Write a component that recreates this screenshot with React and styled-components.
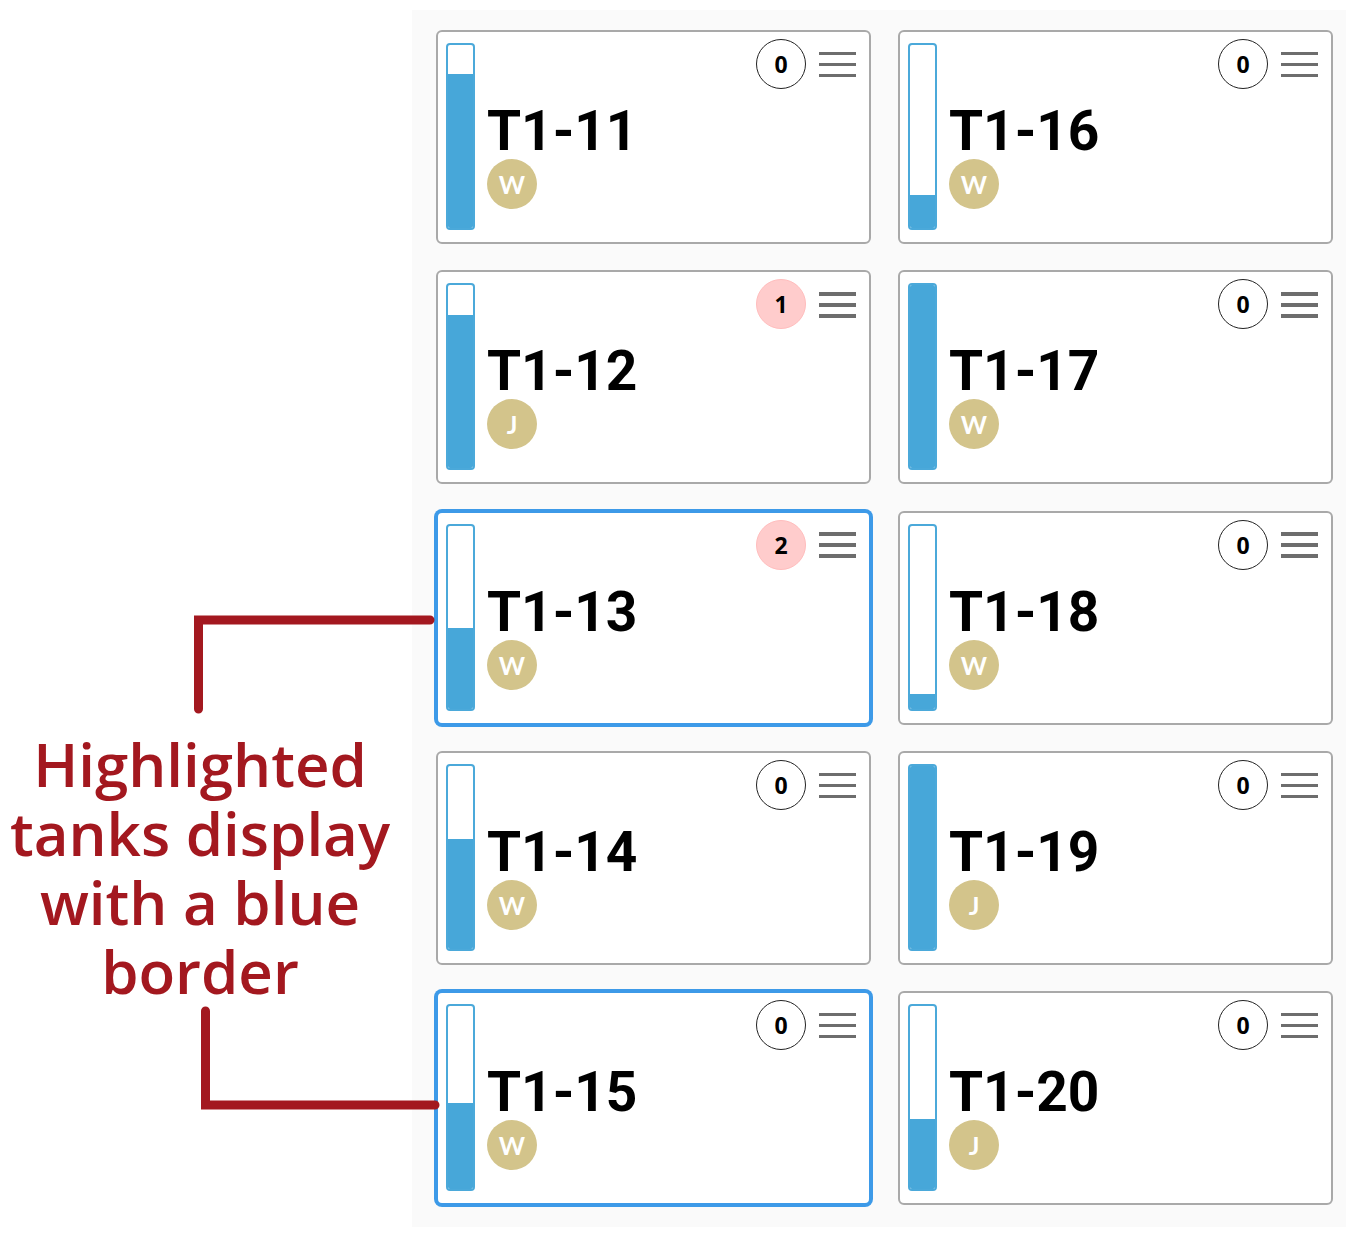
import React from 'react'
import styled, { createGlobalStyle, css } from 'styled-components'

const GlobalStyle = createGlobalStyle`
  body {
    margin: 0;
    background: #ffffff;
    font-family: "Open Sans", "Liberation Sans", sans-serif;
  }
`

const Page = styled.div`
  display: flex;
  align-items: flex-start;
  width: 1371px;
  min-height: 1250px;
`

const Annotation = styled.aside`
  position: relative;
  z-index: 1;
  width: 412px;
  flex: none;
  margin-top: 612px;
  display: flex;
  flex-direction: column;
`

const Bracket = styled.svg`
  display: block;
  width: 412px;
  height: ${({ h }) => h}px;
  overflow: visible;
`

const Note = styled.p`
  margin: 14px 0 0;
  padding-right: 12px;
  text-align: center;
  color: #a3181f;
  font-family: "Open Sans", "Liberation Sans", sans-serif;
  font-weight: 600;
  font-size: 60px;
  line-height: 69px;
`

const Panel = styled.section`
  flex: none;
  width: 934px;
  box-sizing: border-box;
  margin-top: 10px;
  padding: 20px 13px 22px 24px;
  background: #fafafa;
  display: grid;
  grid-template-columns: 435px 435px;
  grid-auto-rows: 214px;
  column-gap: 27px;
  row-gap: 26.25px;
`

const Card = styled.div`
  box-sizing: border-box;
  display: flex;
  gap: 12px;
  padding: 7px 13px 0 8px;
  background: #ffffff;
  border-radius: 6px;
  border: 2px solid ${({ highlighted }) => (highlighted ? '#3d9ae8' : '#a9a9a9')};
  ${({ highlighted }) =>
    highlighted &&
    css`
      box-shadow: 0 0 0 2px #3d9ae8;
    `}
`

const Gauge = styled.div`
  box-sizing: border-box;
  flex: none;
  width: 29px;
  height: 187px;
  margin-top: 4px;
  border: 2px solid #4ba9da;
  border-radius: 4px;
  background: #ffffff;
  display: flex;
  flex-direction: column;
  justify-content: flex-end;
  overflow: hidden;
`

const Fill = styled.div`
  background: #47a7d9;
  flex: none;
`

const Body = styled.div`
  flex: 1;
  display: flex;
  flex-direction: column;
  align-items: flex-start;
`

const Header = styled.div`
  align-self: stretch;
  display: flex;
  justify-content: flex-end;
  align-items: center;
  gap: 13px;
  height: 50px;
`

const Badge = styled.div`
  box-sizing: border-box;
  width: 50px;
  height: 50px;
  border-radius: 50%;
  display: flex;
  align-items: center;
  justify-content: center;
  font-family: "Open Sans", "Liberation Sans", sans-serif;
  font-weight: 700;
  font-size: 23px;
  color: #000000;
  background: ${({ alert }) => (alert ? '#ffcccc' : '#ffffff')};
  border: 1px solid ${({ alert }) => (alert ? '#ffbdbd' : '#222222')};
`

const Menu = styled.div`
  width: 37px;
  display: flex;
  flex-direction: column;
  gap: 7.5px;
  padding-top: 1px;
`

const MenuBar = styled.span`
  display: block;
  height: 3.5px;
  background: #6d6d6d;
`

const Title = styled.h2`
  margin: 14px 0 0;
  font-family: Roboto, "Liberation Sans", sans-serif;
  font-weight: 700;
  font-size: 55px;
  line-height: 56px;
  color: #000000;
`

const Avatar = styled.div`
  width: 50px;
  height: 50px;
  border-radius: 50%;
  background: #d3c48b;
  color: #ffffff;
  display: flex;
  align-items: center;
  justify-content: center;
  font-family: Lato, "Open Sans", sans-serif;
  font-weight: 700;
  font-size: 25px;
`

const tanks = [
  { name: 'T1-11', level: 84, alerts: 0, user: 'W' },
  { name: 'T1-16', level: 18, alerts: 0, user: 'W' },
  { name: 'T1-12', level: 84, alerts: 1, user: 'J' },
  { name: 'T1-17', level: 100, alerts: 0, user: 'W' },
  { name: 'T1-13', level: 44, alerts: 2, user: 'W', highlighted: true },
  { name: 'T1-18', level: 8, alerts: 0, user: 'W' },
  { name: 'T1-14', level: 60, alerts: 0, user: 'W' },
  { name: 'T1-19', level: 100, alerts: 0, user: 'J' },
  { name: 'T1-15', level: 47, alerts: 0, user: 'W', highlighted: true },
  { name: 'T1-20', level: 38, alerts: 0, user: 'J' },
]

const TankCard = ({ tank }) => (
  <Card highlighted={tank.highlighted}>
    <Gauge>
      <Fill style={{ height: `${tank.level}%` }} />
    </Gauge>
    <Body>
      <Header>
        <Badge alert={tank.alerts > 0}>{tank.alerts}</Badge>
        <Menu>
          <MenuBar />
          <MenuBar />
          <MenuBar />
        </Menu>
      </Header>
      <Title>{tank.name}</Title>
      <Avatar>{tank.user}</Avatar>
    </Body>
  </Card>
)

export default function App() {
  return (
    <>
      <GlobalStyle />
      <Page>
        <Annotation>
          <Bracket h={104} viewBox="0 0 412 104">
            <path d="M198.5 97 V8 H430" fill="none" stroke="#a3181f" strokeWidth="9" strokeLinecap="round" strokeLinejoin="miter" />
          </Bracket>
          <Note>Highlighted tanks display with a blue border</Note>
          <Bracket h={107} viewBox="0 0 412 107">
            <path d="M205.5 5 V99 H435" fill="none" stroke="#a3181f" strokeWidth="9" strokeLinecap="round" strokeLinejoin="miter" />
          </Bracket>
        </Annotation>
        <Panel>
          {tanks.map((t) => (
            <TankCard key={t.name} tank={t} />
          ))}
        </Panel>
      </Page>
    </>
  )
}
